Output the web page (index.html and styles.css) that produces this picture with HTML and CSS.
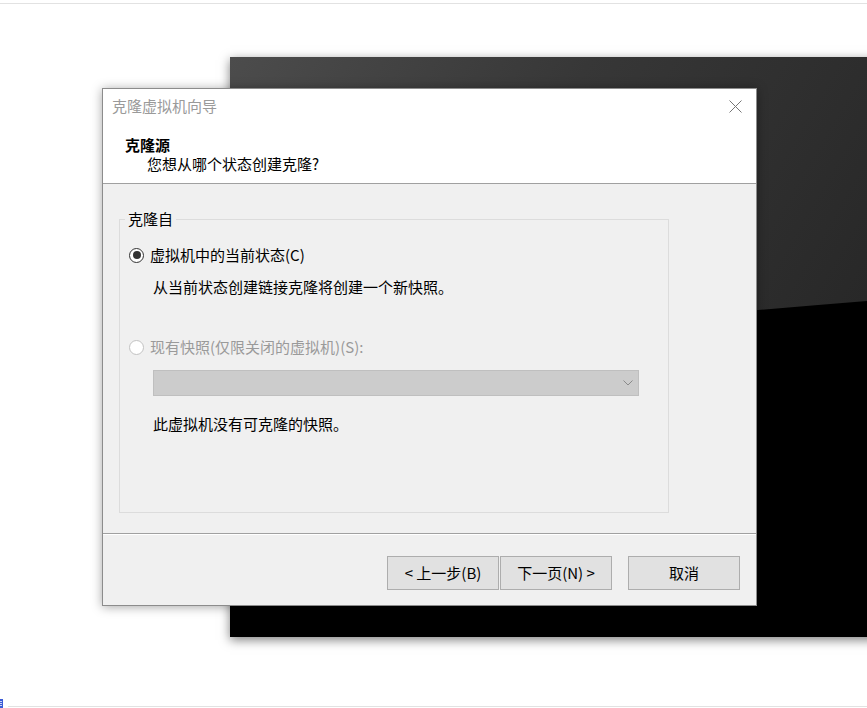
FILE: index.html
```html
<!DOCTYPE html>
<html lang="zh-CN">
<head>
<meta charset="utf-8">
<title>克隆虚拟机向导</title>
<link rel="stylesheet" href="styles.css">
</head>
<body>
<div class="screen">
  <div class="top-rule"></div>

  <div class="vm-window">
    <svg class="vm-screen" width="700" height="580" viewBox="0 0 700 580">
      <defs>
        <linearGradient id="gloss" gradientUnits="userSpaceOnUse" x1="0" y1="0" x2="600" y2="350">
          <stop offset="0" stop-color="#4c4c4c"/>
          <stop offset="0.45" stop-color="#373737"/>
          <stop offset="1" stop-color="#272727"/>
        </linearGradient>
      </defs>
      <rect x="0" y="0" width="700" height="580" fill="url(#gloss)"/>
      <path d="M0 303 Q450 256 900 224 L900 580 L0 580 Z" fill="#000"/>
    </svg>
  </div>

  <div class="dialog">
    <div class="head">
      <div class="titlebar">
        <span class="title">克隆虚拟机向导</span>
        <svg class="close" width="13" height="13" viewBox="0 0 13 13">
          <path d="M0.5 0.5 L12.5 12.5 M12.5 0.5 L0.5 12.5" stroke="#767676" stroke-width="1" fill="none"/>
        </svg>
      </div>
      <div class="heading">克隆源</div>
      <div class="subheading">您想从哪个状态创建克隆?</div>
    </div>

    <div class="content">
      <fieldset class="group">
        <legend class="group-title">克隆自</legend>
        <div class="option">
          <span class="radio radio-checked"></span>
          <span>虚拟机中的当前状态(C)</span>
        </div>
        <p class="note">从当前状态创建链接克隆将创建一个新快照。</p>
        <div class="option option-disabled">
          <span class="radio"></span>
          <span>现有快照(仅限关闭的虚拟机)(S):</span>
        </div>
        <div class="combo">
          <svg class="chevron" width="10" height="6" viewBox="0 0 10 6">
            <path d="M0.5 0.5 L5 5 L9.5 0.5" stroke="#8a8a8a" stroke-width="1" fill="none"/>
          </svg>
        </div>
        <p class="note note-last">此虚拟机没有可克隆的快照。</p>
      </fieldset>
    </div>

    <div class="footer">
      <button class="btn">&lt; 上一步(B)</button>
      <button class="btn btn-next">下一页(N) &gt;</button>
      <button class="btn btn-cancel">取消</button>
    </div>
  </div>

  <div class="bottom-bar">
    <svg class="tray-icon" width="3" height="9" viewBox="0 0 3 9">
      <rect x="0" y="0" width="3" height="9" fill="#3b5bd6"/>
      <rect x="0" y="2" width="2" height="1" fill="#c9d3f5"/>
      <rect x="0" y="4" width="2" height="1" fill="#c9d3f5"/>
      <rect x="0" y="6" width="2" height="1" fill="#c9d3f5"/>
    </svg>
    <div class="bottom-line"></div>
  </div>
</div>
</body>
</html>
```

FILE: styles.css
```css
* {
  box-sizing: border-box;
}

html, body {
  margin: 0;
  padding: 0;
  background: #ffffff;
}

body {
  font-family: "Noto Sans CJK SC", "Microsoft YaHei", sans-serif;
  font-size: 15px;
  color: #000;
}

.screen {
  position: relative;
  width: 867px;
  height: 708px;
  overflow: hidden;
  display: flex;
  flex-direction: column;
}

.top-rule {
  margin-top: 3px;
  height: 1px;
  background: #e2e2e2;
}

/* background VM window */
.vm-window {
  position: absolute;
  left: 230px;
  top: 57px;
  width: 700px;
  height: 580px;
  background: #000;
  box-shadow: 0 3px 10px rgba(0, 0, 0, 0.5);
}

.vm-screen {
  display: block;
}

/* wizard dialog */
.dialog {
  position: absolute;
  left: 102px;
  top: 88px;
  width: 655px;
  height: 518px;
  border: 1px solid #8c8c8c;
  background: #f0f0f0;
  box-shadow: 0 1px 10px rgba(0, 0, 0, 0.35);
  display: flex;
  flex-direction: column;
}

.head {
  height: 95px;
  background: #ffffff;
  border-bottom: 1px solid #a0a0a0;
}

.titlebar {
  height: 34px;
  display: flex;
  align-items: center;
  justify-content: space-between;
  padding: 0 14px 0 9px;
}

.title {
  color: #9a9a9a;
  line-height: 20px;
}

.close {
  display: block;
}

.heading {
  margin-top: 12px;
  padding-left: 22px;
  font-weight: bold;
  line-height: 19px;
}

.subheading {
  padding-left: 44px;
  line-height: 19px;
}

.content {
  height: 349px;
  padding: 25px 0 0 16px;
}

.group {
  margin: 0;
  padding: 0;
  width: 550px;
  height: 304px;
  border: 1px solid #dcdcdc;
  min-width: 0;
}

.group-title {
  margin-left: 5px;
  padding: 0 3px;
  line-height: 20px;
}

.option {
  display: flex;
  align-items: center;
  gap: 6px;
  margin: 16px 0 0 9px;
  line-height: 20px;
}

.option-disabled {
  margin-top: 40px;
  color: #9a9a9a;
}

.radio {
  width: 15px;
  height: 15px;
  border-radius: 50%;
  border: 1px solid #333333;
  background: #ffffff;
  display: flex;
  align-items: center;
  justify-content: center;
  flex: none;
}

.radio-checked::after {
  content: "";
  width: 8px;
  height: 8px;
  border-radius: 50%;
  background: #333333;
}

.option-disabled .radio {
  border-color: #c2c2c2;
}

.note {
  margin: 12px 0 0 33px;
  line-height: 20px;
}

.combo {
  margin: 13px 0 0 33px;
  width: 486px;
  height: 26px;
  background: #cccccc;
  border: 1px solid #bfbfbf;
  display: flex;
  align-items: center;
  justify-content: flex-end;
  padding-right: 5px;
}

.chevron {
  display: block;
}

.note-last {
  margin-top: 18px;
}

.footer {
  flex: 1;
  border-top: 1px solid #a0a0a0;
  box-shadow: inset 0 1px 0 #ffffff;
  display: flex;
  justify-content: flex-end;
  align-items: flex-start;
  padding: 22px 16px 0 0;
}

.btn {
  width: 112px;
  height: 34px;
  margin: 0;
  padding: 0;
  border: 1px solid #adadad;
  background: #e1e1e1;
  font-family: inherit;
  font-size: 15px;
  color: #000;
  line-height: 20px;
}

.btn-next {
  margin-left: 1px;
}

.btn-cancel {
  margin-left: 16px;
}

.bottom-bar {
  margin-top: auto;
  height: 9px;
  display: flex;
  align-items: flex-end;
}

.tray-icon {
  display: block;
  flex: none;
}

.bottom-line {
  flex: 1;
  margin-left: 5px;
  margin-bottom: 1px;
  height: 1px;
  background: #e2e2e2;
}
```
